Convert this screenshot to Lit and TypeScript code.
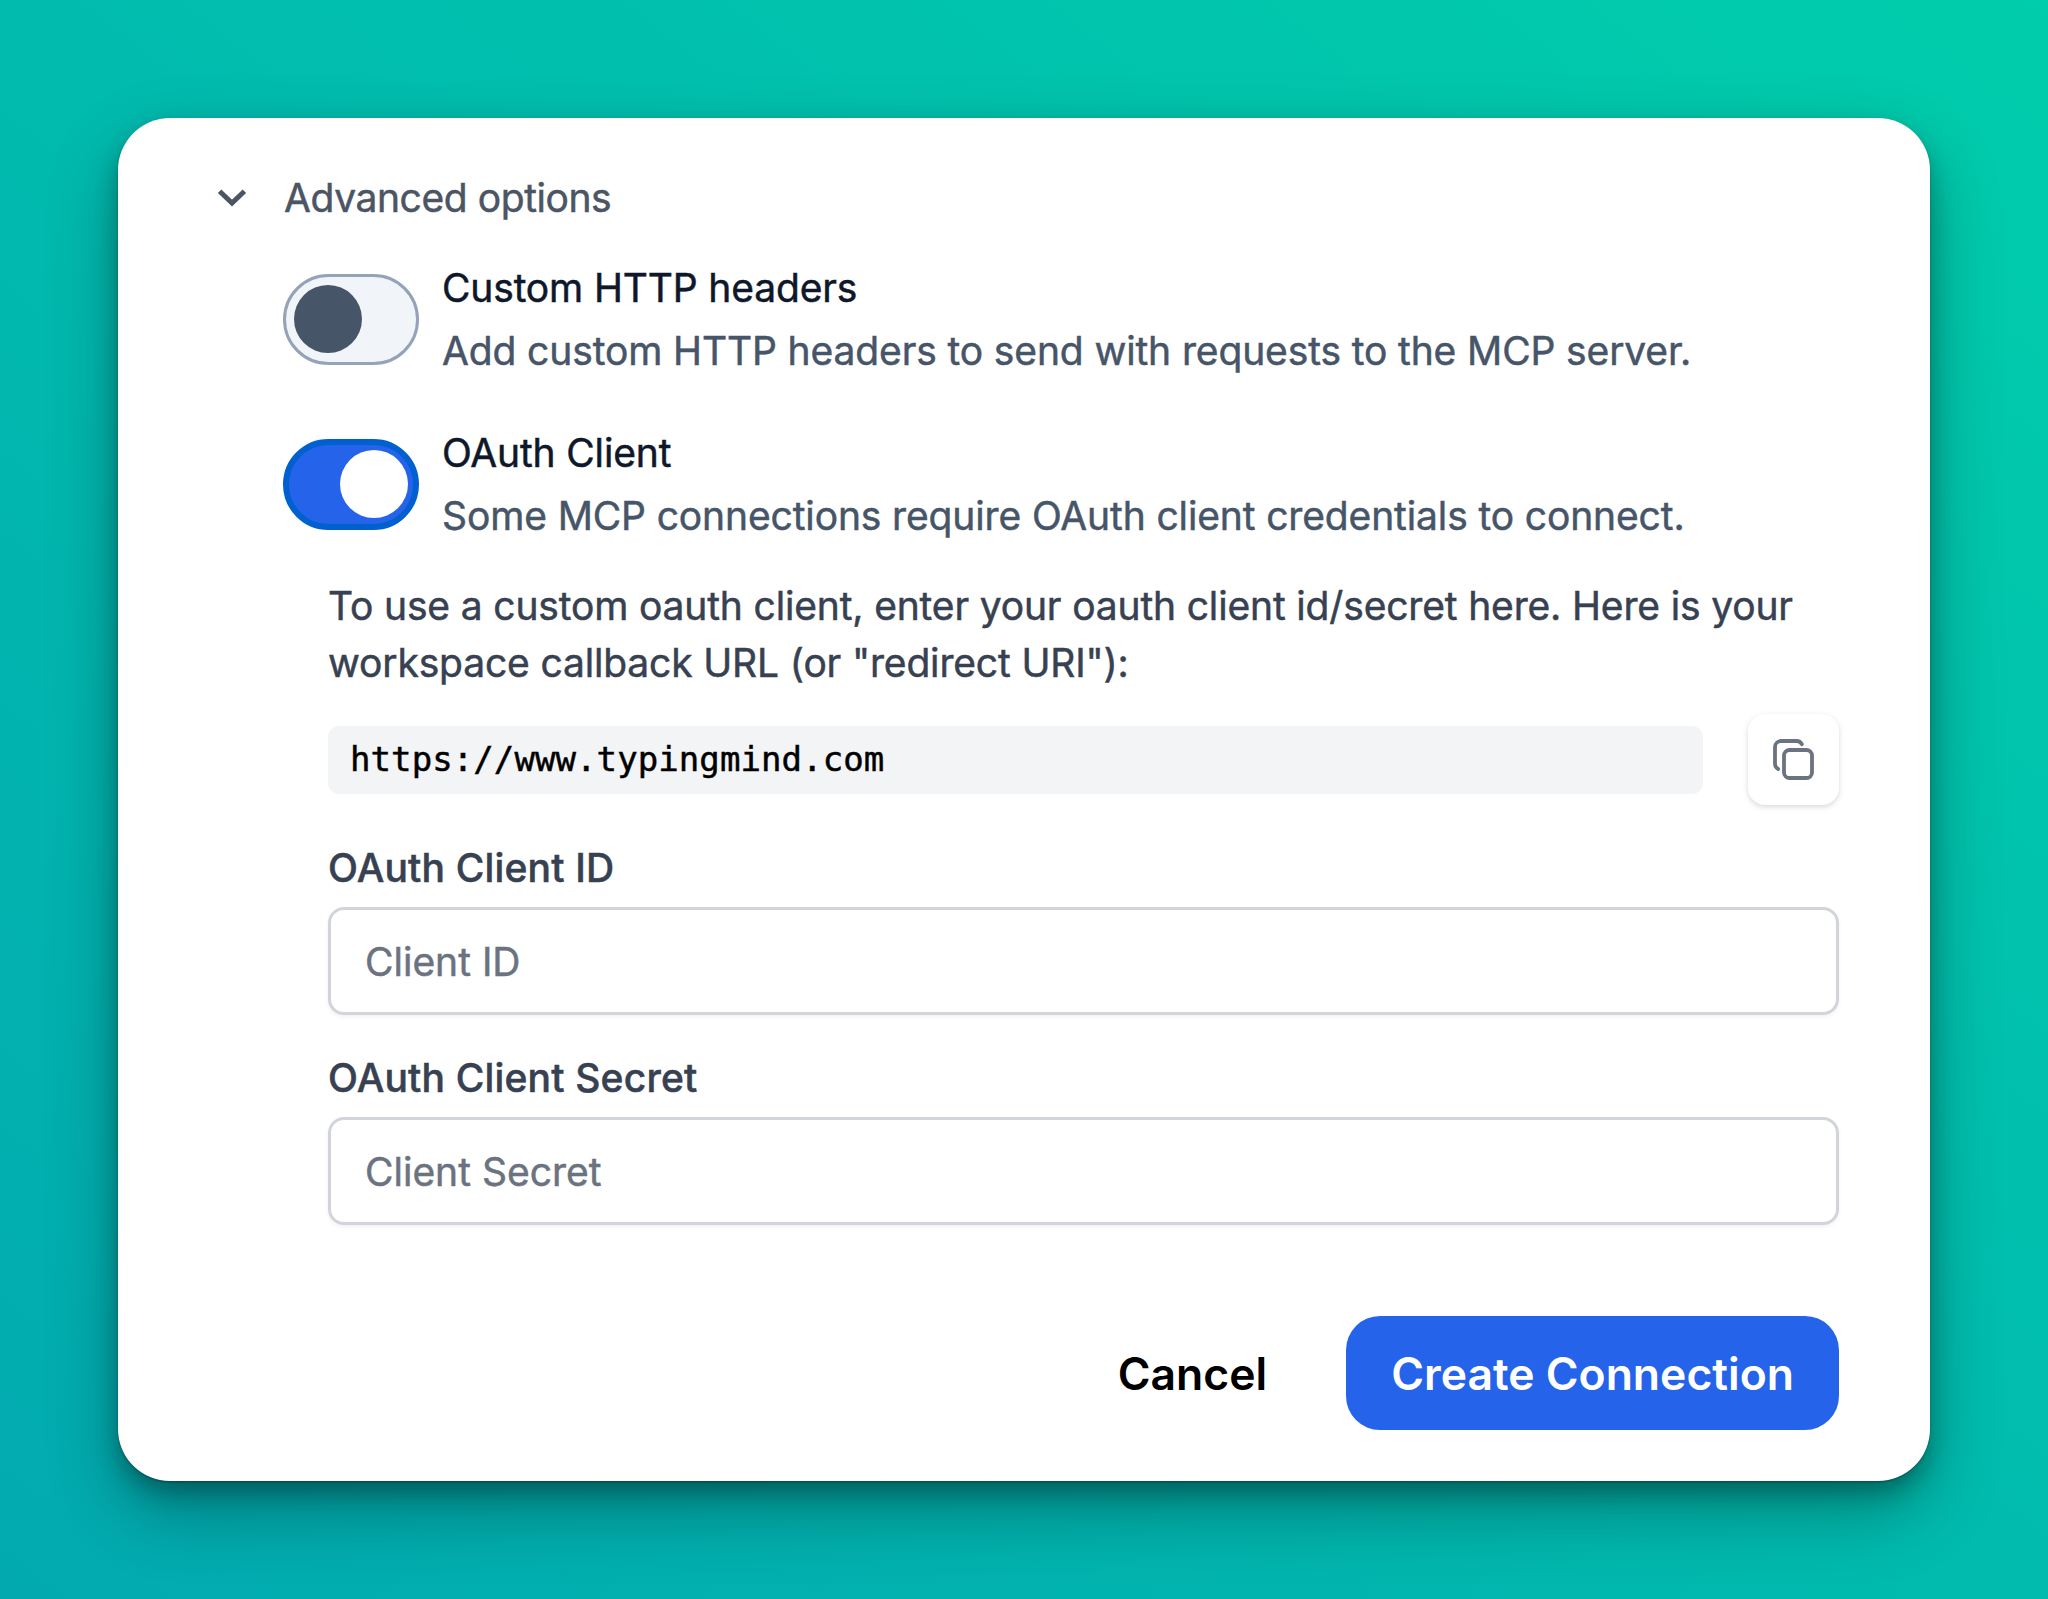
import { LitElement, css, html, svg } from "lit";
import { customElement, property } from "lit/decorators.js";
import { classMap } from "lit/directives/class-map.js";

const CALLBACK_URL = "https://www.typingmind.com";

const chevronIcon = svg`
  <svg class="chevron" viewBox="0 0 30 18" fill="none" aria-hidden="true">
    <path d="M2.6 2.2 15 14 27.4 2.2" stroke="currentColor" stroke-width="5" />
  </svg>
`;

const copyIcon = svg`
  <svg class="copy-icon" viewBox="0 0 41 41" fill="none" aria-hidden="true">
    <g stroke="currentColor" stroke-width="3.8" stroke-linecap="round" stroke-linejoin="round">
      <rect x="11" y="11" width="28" height="28" rx="5.6" />
      <path d="M5.1 30A6 6 0 0 1 2 24.6V8A6 6 0 0 1 8 2H23.6A6 6 0 0 1 28.8 5.2" />
    </g>
  </svg>
`;

/** Switch with a title and a one-line description beside it. */
@customElement("toggle-row")
export class ToggleRow extends LitElement {
  @property() heading = "";

  @property() description = "";

  @property({ type: Boolean, reflect: true }) checked = false;

  static styles = css`
    :host {
      display: flex;
      align-items: center;
      gap: 23px;
    }
    .switch {
      box-sizing: border-box;
      display: flex;
      flex: none;
      align-items: center;
      width: 136px;
      height: 91px;
      padding: 0 8px;
      border: 3px solid #94a3b8;
      border-radius: 46px;
      background: #f1f5f9;
      cursor: pointer;
    }
    .knob {
      width: 68px;
      height: 68px;
      border-radius: 50%;
      background: #475569;
    }
    .switch.on {
      justify-content: flex-end;
      padding: 0 5px;
      border: 6px solid #0060d0;
      background: #2563eb;
    }
    .switch.on .knob {
      background: #fff;
    }
    .heading,
    .description {
      line-height: 63px;
      white-space: nowrap;
    }
    .heading {
      color: #0f172a;
    }
    .description {
      color: #475569;
      letter-spacing: -0.13px;
    }
  `;

  render() {
    return html`
      <button
        class=${classMap({ switch: true, on: this.checked })}
        type="button"
        role="switch"
        aria-checked=${this.checked ? "true" : "false"}
        @click=${this.toggle}
      >
        <span class="knob"></span>
      </button>
      <div>
        <div class="heading">${this.heading}</div>
        <div class="description">${this.description}</div>
      </div>
    `;
  }

  private toggle(): void {
    this.checked = !this.checked;
  }
}

@customElement("text-field")
export class TextField extends LitElement {
  @property() label = "";

  @property() placeholder = "";

  static styles = css`
    :host {
      display: block;
    }
    label {
      display: flex;
      flex-direction: column;
      gap: 11px;
    }
    .label {
      color: #374151;
      font-weight: 500;
      letter-spacing: 0.17px;
      line-height: 57px;
    }
    .input {
      box-sizing: border-box;
      width: 100%;
      height: 108px;
      padding: 0 34px;
      border: 3px solid #d1d5db;
      border-radius: 16px;
      background: #fff;
      box-shadow: 0 2px 4px rgba(0, 0, 0, 0.06);
      color: #111827;
      font: inherit;
      letter-spacing: 0;
      outline: none;
    }
    .input::placeholder {
      color: #6b7280;
      opacity: 1;
    }
  `;

  render() {
    return html`
      <label>
        <span class="label">${this.label}</span>
        <input class="input" type="text" placeholder=${this.placeholder} />
      </label>
    `;
  }
}

@customElement("app-root")
export class AppRoot extends LitElement {
  static styles = css`
    :host {
      box-sizing: border-box;
      display: flex;
      width: 2048px;
      height: 1599px;
      padding: 118px;
      background: linear-gradient(to top right, #02aab0, #00cdac);
      font-family: Inter, "Liberation Sans", sans-serif;
      font-size: 39px;
      letter-spacing: -0.16px;
      /* Slightly heavier than Inter's regular cut. */
      -webkit-text-stroke-width: 0.5px;
    }
    .card {
      box-sizing: border-box;
      display: flex;
      flex: 1;
      flex-direction: column;
      padding: 51px 91px 51px 99px;
      border-radius: 52px;
      background: #fff;
      box-shadow:
        0 1px 2px rgba(0, 0, 0, 0.3),
        0 12px 24px -2px rgba(0, 0, 0, 0.3),
        0 30px 70px rgba(0, 0, 0, 0.3);
    }
    .summary {
      display: flex;
      align-items: center;
      gap: 37px;
      height: 56px;
      color: #4b5563;
      letter-spacing: -0.42px;
    }
    .chevron {
      width: 30px;
      height: 18px;
      margin-top: 2px;
    }
    .options {
      display: flex;
      flex-direction: column;
      gap: 39px;
      margin: 31px 0 0 66px;
    }
    .details {
      display: flex;
      flex-direction: column;
      margin: 30px 0 0 111px;
      color: #374151;
    }
    .hint {
      margin: 0 0 23px;
      line-height: 57px;
    }
    .callback {
      display: flex;
      align-items: center;
      gap: 45px;
      margin-bottom: 34px;
    }
    .url {
      flex: 1;
      height: 68px;
      padding-left: 22px;
      border-radius: 11px;
      background: #f3f4f6;
      color: #000;
      font-family: "DejaVu Sans Mono", monospace;
      font-size: 34px;
      letter-spacing: 0.08px;
      line-height: 66px;
    }
    .copy {
      display: flex;
      align-items: center;
      justify-content: center;
      width: 91px;
      height: 91px;
      padding: 0;
      border: 0;
      border-radius: 17px;
      background: #fff;
      box-shadow:
        0 2px 7px rgba(0, 0, 0, 0.1),
        0 2px 4px rgba(0, 0, 0, 0.06);
      color: #6b7280;
      cursor: pointer;
    }
    .copy-icon {
      width: 41px;
      height: 41px;
    }
    .fields {
      display: flex;
      flex-direction: column;
      gap: 34px;
    }
    .actions {
      display: flex;
      justify-content: flex-end;
      gap: 34px;
      margin-top: 91px;
    }
    .button {
      height: 114px;
      padding: 2px 45px 0;
      border: 0;
      border-radius: 34px;
      background: transparent;
      color: #000;
      font: 600 44.5px Inter, "Liberation Sans", sans-serif;
      -webkit-text-stroke-width: 0;
      cursor: pointer;
    }
    .button.primary {
      background: #2563eb;
      color: #fff;
    }
  `;

  render() {
    return html`
      <section class="card">
        <div class="summary">${chevronIcon}<span>Advanced options</span></div>
        <div class="options">
          <toggle-row
            heading="Custom HTTP headers"
            description="Add custom HTTP headers to send with requests to the MCP server."
          ></toggle-row>
          <toggle-row
            heading="OAuth Client"
            description="Some MCP connections require OAuth client credentials to connect."
            checked
          ></toggle-row>
        </div>
        <div class="details">
          <p class="hint">
            To use a custom oauth client, enter your oauth client id/secret here. Here is your<br />
            workspace callback URL (or "redirect URI"):
          </p>
          <div class="callback">
            <div class="url">${CALLBACK_URL}</div>
            <button class="copy" type="button" aria-label="Copy" @click=${this.copyUrl}>
              ${copyIcon}
            </button>
          </div>
          <div class="fields">
            <text-field label="OAuth Client ID" placeholder="Client ID"></text-field>
            <text-field label="OAuth Client Secret" placeholder="Client Secret"></text-field>
          </div>
        </div>
        <div class="actions">
          <button class="button" type="button">Cancel</button>
          <button class="button primary" type="button">Create Connection</button>
        </div>
      </section>
    `;
  }

  private copyUrl(): void {
    void navigator.clipboard?.writeText(CALLBACK_URL);
  }
}

declare global {
  interface HTMLElementTagNameMap {
    "app-root": AppRoot;
    "text-field": TextField;
    "toggle-row": ToggleRow;
  }
}
